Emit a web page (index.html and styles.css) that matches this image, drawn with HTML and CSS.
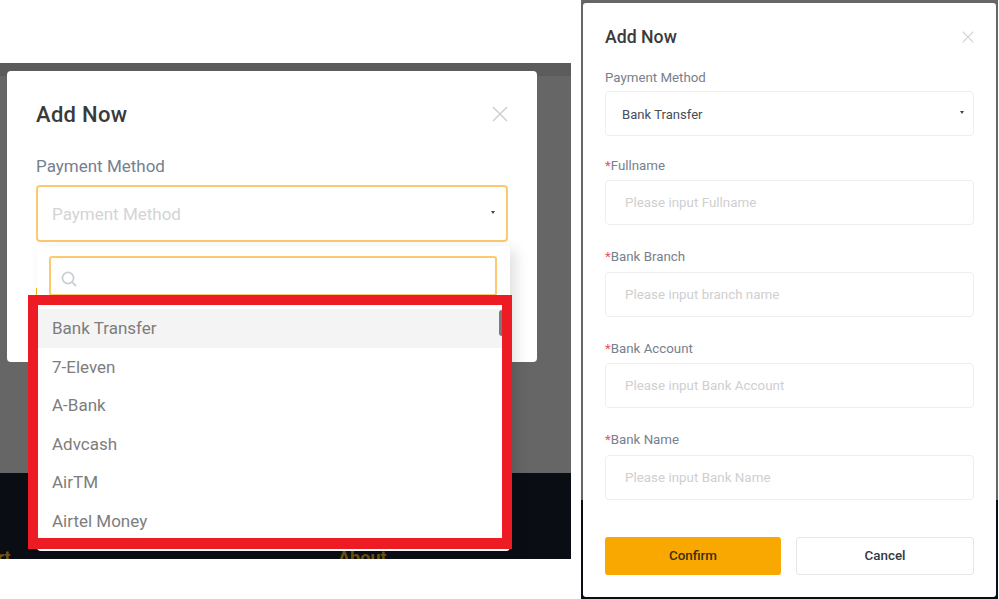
FILE: index.html
```html
<!DOCTYPE html>
<html lang="en">
<head>
<meta charset="utf-8">
<title>Add Now</title>
<link rel="stylesheet" href="styles.css">
</head>
<body>
<section class="shot-left">
  <div class="backdrop"></div>
  <div class="footer">
    <span class="footer-support">Support</span>
    <span class="footer-about">About</span>
  </div>

  <div class="modal-large">
    <div class="head-large">
      <h2 class="title-large">Add Now</h2>
      <svg class="close-large" viewBox="0 0 16 16"><path d="M1 1 15 15M15 1 1 15"/></svg>
    </div>
    <div class="label-large">Payment Method</div>
    <div class="select-large">
      <span class="ph-large">Payment Method</span>
      <span class="caret"></span>
    </div>
    <div class="peek"></div>
  </div>

  <div class="dropdown">
    <div class="search">
      <svg class="search-icon" viewBox="0 0 16 16"><circle cx="7" cy="7" r="5.6"/><path d="M11 11 15 15"/></svg>
    </div>
    <ul class="options">
      <li class="option option-active">Bank Transfer</li>
      <li class="option">7-Eleven</li>
      <li class="option">A-Bank</li>
      <li class="option">Advcash</li>
      <li class="option">AirTM</li>
      <li class="option">Airtel Money</li>
    </ul>
    <div class="scroll-thumb"></div>
  </div>

  <div class="highlight"></div>
</section>

<section class="shot-right">
  <div class="modal-small">
    <div class="head-small">
      <h2 class="title-small">Add Now</h2>
      <svg class="close-small" viewBox="0 0 12 12"><path d="M.7.7 11.3 11.3M11.3.7.7 11.3"/></svg>
    </div>
    <div class="label-small label-first">Payment Method</div>
    <div class="select-small">
      <span class="select-value">Bank Transfer</span>
      <span class="caret caret-small"></span>
    </div>
    <div class="fields">
      <div class="field">
        <div class="label-small"><span class="req">*</span>Fullname</div>
        <input class="input" placeholder="Please input Fullname">
      </div>
      <div class="field">
        <div class="label-small"><span class="req">*</span>Bank Branch</div>
        <input class="input" placeholder="Please input branch name">
      </div>
      <div class="field">
        <div class="label-small"><span class="req">*</span>Bank Account</div>
        <input class="input" placeholder="Please input Bank Account">
      </div>
      <div class="field">
        <div class="label-small"><span class="req">*</span>Bank Name</div>
        <input class="input" placeholder="Please input Bank Name">
      </div>
    </div>
    <div class="actions">
      <button class="btn btn-confirm">Confirm</button>
      <button class="btn btn-cancel">Cancel</button>
    </div>
  </div>
</section>
</body>
</html>
```
FILE: styles.css
```css
* { box-sizing: border-box; }
html, body { margin: 0; padding: 0; }
body {
  width: 999px;
  height: 599px;
  overflow: hidden;
  background: #fff;
  display: flex;
  align-items: flex-start;
  gap: 10px;
  font-family: Roboto, "Liberation Sans", sans-serif;
  color: #76808f;
}
h2 { margin: 0; }

/* left screenshot */
.shot-left {
  position: relative;
  width: 571px;
  height: 496px;
  margin-top: 63px;
  display: flex;
  flex-direction: column;
  overflow: hidden;
}
.backdrop {
  flex: none;
  height: 410px;
  background: linear-gradient(#5c5c5c 0, #5c5c5c 13px, #666 13px);
}
.footer {
  flex: none;
  height: 86px;
  background: #0a0d14;
  display: flex;
  padding-top: 74px;
  font-size: 18px;
  font-weight: 700;
  line-height: 22px;
  color: #6e5410;
  white-space: nowrap;
  overflow: hidden;
}
.footer-support { flex: none; margin-left: -54px; width: 392px; }
.modal-large {
  position: absolute;
  left: 7px;
  top: 8px;
  width: 530px;
  height: 291px;
  background: #fff;
  border-radius: 4px;
  padding: 29px 29px 0;
}
.head-large { display: flex; justify-content: space-between; align-items: center; height: 28px; }
.title-large { font-size: 22px; letter-spacing: .3px; font-weight: 500; color: #3a3a3a; }
.close-large { width: 16px; height: 16px; fill: none; stroke: #cfcfcf; stroke-width: 1.5; }
.label-large { font-size: 17px; line-height: 20px; margin-top: 28px; }
.select-large {
  margin-top: 9px;
  width: 472px;
  height: 57px;
  border: 2px solid #fdc96f;
  border-radius: 4px;
  padding: 0 11px 0 14px;
  display: flex;
  align-items: center;
  justify-content: space-between;
}
.ph-large { font-size: 17px; color: #d4d4d4; }
.caret {
  width: 0;
  height: 0;
  border-left: 2.5px solid transparent;
  border-right: 2.5px solid transparent;
  border-top: 3.5px solid #444;
  margin-top: -2px;
}
.peek {
  margin-top: 46px;
  width: 472px;
  height: 20px;
  border: 2px solid #f0b90b;
  border-bottom: 0;
}
.dropdown {
  position: absolute;
  left: 37px;
  top: 183px;
  width: 473px;
  height: 305px;
  background: #fff;
  border-radius: 4px;
  padding: 10px 13px 0 12px;
  box-shadow: 6px 4px 14px rgba(0, 0, 0, .12);
}
.search {
  width: 448px;
  height: 40px;
  border: 2px solid #fdc96f;
  border-radius: 3px;
  display: flex;
  align-items: center;
  padding: 6px 0 0 10px;
}
.search-icon { width: 16px; height: 16px; fill: none; stroke: #c9d0d6; stroke-width: 1.8; }
.options { list-style: none; margin: 13px -13px 0 -12px; padding: 0; }
.option {
  height: 38.5px;
  line-height: 39.5px;
  padding-left: 15px;
  font-size: 17px;
  color: #7d7d7d;
}
.option-active { background: #f4f4f4; }
.scroll-thumb {
  position: absolute;
  left: 462px;
  top: 64px;
  width: 5px;
  height: 26px;
  border-radius: 3px 0 0 3px;
  background: #7a7a7a;
}
.highlight {
  position: absolute;
  left: 28px;
  top: 232px;
  width: 484px;
  height: 254px;
  border: 10px solid #ed1c24;
  border-bottom-width: 11px;
}

/* right screenshot */
.shot-right {
  flex: none;
  width: 417px;
  height: 599px;
  padding: 3px 2px 2px 2px;
  background: linear-gradient(#666 0, #666 500px, #0a0d14 500px);
}
.modal-small {
  height: 594px;
  background: #fff;
  border-radius: 3px;
  padding: 24px 22px 0;
  display: flex;
  flex-direction: column;
}
.head-small { display: flex; justify-content: space-between; align-items: center; height: 20px; }
.title-small { font-size: 17.7px; font-weight: 500; color: #3a3a3a; }
.close-small { width: 12px; height: 12px; fill: none; stroke: #d2d2d2; stroke-width: 1.2; }
.label-small { font-size: 13.3px; line-height: 16px; color: #76808f; }
.label-first { margin-top: 22px; padding-top: 1px; }
.select-small {
  margin-top: 5px;
  height: 45px;
  border: 1px solid #eeeeee;
  border-radius: 4px;
  padding: 0 9px 0 16px;
  display: flex;
  align-items: center;
  justify-content: space-between;
  font-size: 13.1px;
  color: #474d57;
}
.select-value { padding-top: 2px; }
.caret-small { border-top-color: #444; border-left-width: 2px; border-right-width: 2px; border-top-width: 3px; }
.fields { display: flex; flex-direction: column; margin-top: 20px; }
.field { height: 91.67px; }
.field .label-small { padding-top: 1.5px; }
.input {
  display: block;
  width: 100%;
  height: 45px;
  margin-top: 6.5px;
  border: 1px solid #eeeeee;
  border-radius: 4px;
  padding: 0 19px;
  font-family: inherit;
  font-size: 13.4px;
  outline: none;
  background: #fff;
}
.input::placeholder { color: #cfcfcf; opacity: 1; }
.req { color: #f0524f; }
.actions { display: flex; gap: 15px; margin-top: 14px; }
.btn {
  height: 38px;
  border-radius: 3px;
  font-family: inherit;
  font-size: 13.4px;
  font-weight: 500;
  padding: 0;
}
.btn-confirm { width: 176px; background: #f8a800; border: 0; color: #3b2f0c; }
.btn-cancel { width: 178px; background: #fff; border: 1px solid #e6e6e6; color: #33383f; }
```
